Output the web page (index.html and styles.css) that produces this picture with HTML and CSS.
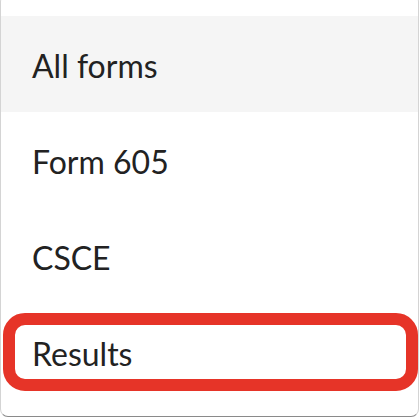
FILE: index.html
```html
<!DOCTYPE html>
<html>
<head>
<meta charset="utf-8">
<link rel="stylesheet" href="styles.css">
</head>
<body>
<div class="menu">
  <div class="item active">All forms</div>
  <div class="item">Form 605</div>
  <div class="item">CSCE</div>
  <div class="item highlighted">Results</div>
</div>
</body>
</html>
```
FILE: styles.css
```css
html, body {
  margin: 0;
  padding: 0;
  background: #ffffff;
  overflow: hidden;
}
.menu {
  box-sizing: border-box;
  width: 419px;
  margin-top: -6px;
  padding: 21px 0 16px;
  border: 1px solid #d4d4d4;
  border-bottom-color: #8a8a8a;
  border-radius: 8px;
  background: #ffffff;
  font-family: Lato, "Noto Sans", sans-serif;
}
.item {
  position: relative;
  height: 96px;
  display: flex;
  align-items: center;
  padding-left: 31px;
  padding-top: 2px;
  box-sizing: border-box;
  font-size: 32px;
  color: #222222;
}
.item.active {
  background: #f5f5f5;
}
.item.highlighted::after {
  content: "";
  position: absolute;
  top: 9px;
  bottom: 9px;
  left: 2px;
  right: 0;
  border: 12px solid #e63428;
  border-radius: 22px;
}
```
